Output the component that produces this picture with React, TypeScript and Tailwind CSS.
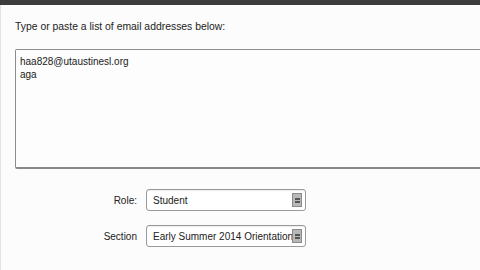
import React from "react";

function SelectBox({ value }: { value: string }) {
  return (
    <div className="flex items-center w-[160px] h-[22px] border border-[#9a9a9a] rounded-[3px] bg-white pl-[6px] pr-[3px] shadow-[inset_0_1px_1px_rgba(0,0,0,0.08)]">
      <span className="flex-1 overflow-hidden whitespace-nowrap text-[10px] text-[#222]">{value}</span>
      <div className="w-[10px] h-[14px] bg-[#b8b8b8] border border-[#8a8a8a] flex flex-col items-center justify-center gap-[1px]">
        <div className="w-[5px] h-[2px] bg-[#555]" />
        <div className="w-[5px] h-[2px] bg-[#555]" />
      </div>
    </div>
  );
}

export default function App() {
  return (
    <div className="w-[480px] h-[270px] overflow-hidden bg-[#fcfcfc] font-['Liberation_Sans',Arial,sans-serif]">
      <div className="h-[5px] bg-[#3c3c3c]" />
      <div className="flex h-[265px]">
        <div className="w-[2px] bg-[#b4b4b4]" />
        <div className="w-[3px] bg-[#f4f4f4] border-r border-[#e2e2e2]" />
        <div className="flex-1 pl-[14px] pt-[16px]">
          <p className="text-[10.4px] text-[#222] leading-[12px]">
            Type or paste a list of email addresses below:
          </p>
          <div className="mt-[16px] h-[120px] w-[480px] bg-[#fdfdfd] border border-[#8c8c8c] border-b-2 border-b-[#888] rounded-l-[2px] px-[4px] pt-[5px] text-[10px] leading-[13px] text-[#1a1a1a]">
            <div>haa828@utaustinesl.org</div>
            <div>aga</div>
          </div>
          <div className="mt-[20px] grid grid-cols-[122px_auto] gap-x-[9px] gap-y-[14px] items-center">
            <span className="text-right text-[10px] text-[#222]">Role:</span>
            <SelectBox value="Student" />
            <span className="text-right text-[10px] text-[#222]">Section</span>
            <SelectBox value="Early Summer 2014 Orientation" />
          </div>
        </div>
      </div>
    </div>
  );
}
